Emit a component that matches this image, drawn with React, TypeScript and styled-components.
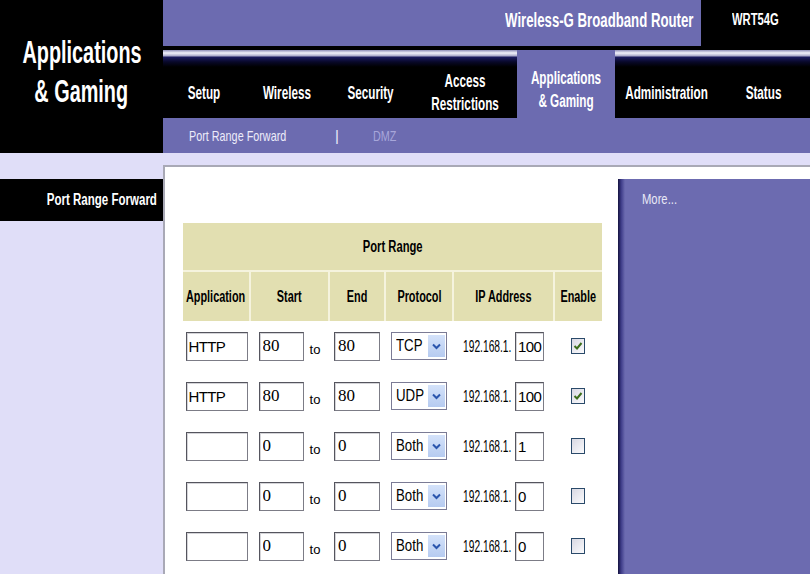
import React from 'react';
import styled, { createGlobalStyle } from 'styled-components';

const PURPLE = '#6c6bb0';
const LAVENDER = '#e0def8';
const KHAKI = '#e2dfb1';
const KHAKI_LINE = '#f5f3de';

const Global = createGlobalStyle`
  html, body { margin: 0; padding: 0; width: 810px; height: 574px; overflow: hidden; background: ${LAVENDER}; }
  body { font-family: "Liberation Sans", Arial, sans-serif; }
  * { box-sizing: border-box; }
`;

const Narrow = styled.span<{ $s?: number; $o?: string }>`
  display: inline-block;
  white-space: nowrap;
  transform: scaleX(${(p) => p.$s ?? 0.66});
  transform-origin: ${(p) => p.$o ?? 'center'};
`;

const Page = styled.div`
  width: 810px;
  height: 574px;
  display: flex;
  flex-direction: column;
`;

/* ---------- header ---------- */
const Header = styled.header`
  display: flex;
  height: 153px;
  flex: none;
`;

const TitleBlock = styled.h1`
  margin: 0;
  width: 163px;
  flex: none;
  background: #000;
  color: #fff;
  font-weight: bold;
  font-size: 31px;
  line-height: 39px;
  display: flex;
  flex-direction: column;
  align-items: center;
  padding-top: 33px;
`;

const HeaderMain = styled.div`
  flex: 1;
  display: flex;
  flex-direction: column;
`;

const TopBar = styled.div`
  height: 46px;
  display: flex;
`;

const ProductName = styled.div`
  flex: 1;
  background: ${PURPLE};
  color: #fff;
  font-weight: bold;
  font-size: 20px;
  display: flex;
  align-items: center;
  justify-content: flex-end;
  padding: 0 8px 6px 0;
`;

const ModelBox = styled.div`
  width: 109px;
  background: #000;
  color: #fff;
  font-weight: bold;
  font-size: 16px;
  display: flex;
  align-items: center;
  justify-content: center;
  padding-bottom: 6px;
`;

const Rule = styled.div`
  height: 4px;
  background: #000;
`;

const NavRow = styled.nav`
  height: 68px;
  display: grid;
  grid-template-columns: 82px 84px 84px 104px 98px 102px 1fr;
  background: #000;
`;

const NavItem = styled.div<{ $active?: boolean }>`
  display: flex;
  align-items: center;
  justify-content: center;
  text-align: center;
  color: #fff;
  font-weight: bold;
  font-size: 18px;
  line-height: 23px;
  padding-top: ${(p) => (p.$active ? '11px' : '18px')};
  background: ${(p) =>
    p.$active
      ? PURPLE
      : 'linear-gradient(to bottom, #8e8eb8 0px, #f2f2fc 3px, #a8a8c8 6px, #1c1c62 7px, #080828 12px, #000 17px)'};
`;

const SubBar = styled.div`
  height: 35px;
  background: ${PURPLE};
  display: grid;
  grid-template-columns: 146px 38px auto;
  align-items: center;
  padding-left: 26px;
  font-size: 15px;
`;

const SubItem = styled.span<{ $dim?: boolean }>`
  color: ${(p) => (p.$dim ? '#a7a6da' : '#ececfa')};
`;

/* ---------- body ---------- */
const Body = styled.div`
  flex: 1;
  display: flex;
  min-height: 0;
`;

const Sidebar = styled.aside`
  width: 163px;
  flex: none;
  padding-top: 26px;
`;

const SideItem = styled.div`
  height: 42px;
  background: #000;
  color: #fff;
  font-weight: bold;
  font-size: 16px;
  display: flex;
  align-items: center;
  justify-content: flex-end;
  padding-right: 6px;
`;

const Main = styled.main`
  flex: 1;
  margin-top: 12px;
  border-top: 2px solid #a9a9b6;
  border-left: 2px solid #a9a9b6;
  background: #fff;
  display: flex;
  overflow: hidden;
`;

const Content = styled.section`
  width: 453px;
  flex: none;
  padding: 56px 0 0 18px;
`;

const MorePanel = styled.aside`
  flex: 1;
  margin-top: 12px;
  background: linear-gradient(to right, #14123e 0px, #3c3a86 3px, ${PURPLE} 7px);
  color: #e8e8f6;
  font-size: 15px;
  padding: 11px 0 0 24px;
`;

/* ---------- table ---------- */
const Table = styled.table`
  width: 419px;
  border-collapse: collapse;
  table-layout: fixed;
`;

const TitleCell = styled.th`
  background: ${KHAKI};
  height: 48px;
  padding: 0;
  font-size: 16px;
  font-weight: bold;
  color: #000;
  border-bottom: 2px solid ${KHAKI_LINE};
`;

const HeadCell = styled.th`
  background: ${KHAKI};
  height: 50px;
  padding: 0;
  font-size: 16px;
  font-weight: bold;
  color: #000;
  border-left: 2px solid ${KHAKI_LINE};
  &:first-child {
    border-left: none;
  }
`;

const Cell = styled.td`
  height: 50px;
  padding: 0;
`;

const CellInner = styled.div<{ $gap?: number }>`
  display: flex;
  align-items: center;
  justify-content: center;
  gap: ${(p) => p.$gap ?? 0}px;
`;

const TextInput = styled.input<{ $w: number; $serif?: boolean }>`
  width: ${(p) => p.$w}px;
  height: 29px;
  margin: 0;
  padding: ${(p) => (p.$serif ? '0 2px 0 3px' : '0 0 0 2px')};
  border: 1px solid #7c7c86;
  border-top-color: #55555e;
  border-left-color: #55555e;
  box-shadow: inset 1px 1px 0 #d4d4d8;
  background: #fff;
  color: #000;
  font-family: ${(p) => (p.$serif ? '"Liberation Serif", "Times New Roman", serif' : '"Liberation Sans", Arial, sans-serif')};
  font-size: ${(p) => (p.$serif ? 17 : 15)}px;
  letter-spacing: ${(p) => (p.$serif ? '0' : '-0.6px')};
  outline: none;
`;

const ToLabel = styled.span`
  font-size: 13px;
  color: #000;
  padding-top: 7px;
`;

const SelectBox = styled.div`
  width: 56px;
  height: 28px;
  border: 1px solid #7b7b95;
  background: #fff;
  display: flex;
  align-items: stretch;
  font-size: 17px;
  color: #000;
`;

const SelectValue = styled.span`
  flex: 1;
  min-width: 0;
  display: flex;
  align-items: center;
  padding-left: 4px;
`;

const SelectArrow = styled.span`
  width: 17px;
  flex: none;
  margin: 2px 1px 2px 0;
  background: linear-gradient(to bottom, #d4e2fa, #b6cbf0);
  display: flex;
  align-items: center;
  justify-content: center;
`;

const IpPrefix = styled.span`
  display: inline-block;
  width: 52px;
  font-size: 16px;
  color: #000;
  padding-top: 2px;
`;

const CheckBox = styled.span`
  width: 14px;
  height: 16px;
  border: 1px solid #2a4a6a;
  background: linear-gradient(135deg, #d8d8e2, #fbfbfd);
  display: flex;
  align-items: center;
  justify-content: center;
`;

type Row = { app: string; start: string; end: string; proto: string; ip: string; on: boolean };

const rows: Row[] = [
  { app: 'HTTP', start: '80', end: '80', proto: 'TCP', ip: '100', on: true },
  { app: 'HTTP', start: '80', end: '80', proto: 'UDP', ip: '100', on: true },
  { app: '', start: '0', end: '0', proto: 'Both', ip: '1', on: false },
  { app: '', start: '0', end: '0', proto: 'Both', ip: '0', on: false },
  { app: '', start: '0', end: '0', proto: 'Both', ip: '0', on: false },
];

const headers = ['Application', 'Start', 'End', 'Protocol', 'IP Address', 'Enable'];
const colWidths = [67, 79, 56, 68, 101, 48];

const Chevron = () => (
  <svg width="9" height="7" viewBox="0 0 9 7">
    <path d="M1 1.5 L4.5 5 L8 1.5" fill="none" stroke="#2a55ad" strokeWidth="2" />
  </svg>
);

const Tick = () => (
  <svg width="10" height="10" viewBox="0 0 10 10">
    <path d="M1.5 5 L4 7.5 L8.5 2" fill="none" stroke="#3d6e1c" strokeWidth="2" />
  </svg>
);

const navItems: { label: React.ReactNode; active?: boolean }[] = [
  { label: 'Setup' },
  { label: 'Wireless' },
  { label: 'Security' },
  { label: (<>Access<br />Restrictions</>) },
  { label: (<>Applications<br />&amp; Gaming</>), active: true },
  { label: 'Administration' },
  { label: 'Status' },
];

export default function App() {
  return (
    <Page>
      <Global />
      <Header>
        <TitleBlock>
          <Narrow $s={0.64}>Applications</Narrow>
          <Narrow $s={0.64}>&amp; Gaming</Narrow>
        </TitleBlock>
        <HeaderMain>
          <TopBar>
            <ProductName>
              <Narrow $s={0.66} $o="right">Wireless-G Broadband Router</Narrow>
            </ProductName>
            <ModelBox>
              <Narrow $s={0.7}>WRT54G</Narrow>
            </ModelBox>
          </TopBar>
          <Rule />
          <NavRow>
            {navItems.map((n, i) => (
              <NavItem key={i} $active={n.active}>
                <Narrow $s={0.65}>{n.label}</Narrow>
              </NavItem>
            ))}
          </NavRow>
          <SubBar>
            <SubItem><Narrow $s={0.72} $o="left">Port Range Forward</Narrow></SubItem>
            <SubItem>|</SubItem>
            <SubItem $dim><Narrow $s={0.72} $o="left">DMZ</Narrow></SubItem>
          </SubBar>
        </HeaderMain>
      </Header>
      <Body>
        <Sidebar>
          <SideItem>
            <Narrow $s={0.72} $o="right">Port Range Forward</Narrow>
          </SideItem>
        </Sidebar>
        <Main>
          <Content>
            <Table>
              <colgroup>
                {colWidths.map((w, i) => (
                  <col key={i} style={{ width: w }} />
                ))}
              </colgroup>
              <thead>
                <tr>
                  <TitleCell colSpan={6}><Narrow $s={0.7}>Port Range</Narrow></TitleCell>
                </tr>
                <tr>
                  {headers.map((h) => (
                    <HeadCell key={h}>
                      <CellInner><Narrow $s={0.68}>{h}</Narrow></CellInner>
                    </HeadCell>
                  ))}
                </tr>
              </thead>
              <tbody>
                {rows.map((r, i) => (
                  <tr key={i}>
                    <Cell>
                      <CellInner>
                        <TextInput $w={62} defaultValue={r.app} />
                      </CellInner>
                    </Cell>
                    <Cell>
                      <CellInner $gap={6}>
                        <TextInput $w={45} $serif defaultValue={r.start} />
                        <ToLabel>to</ToLabel>
                      </CellInner>
                    </Cell>
                    <Cell>
                      <CellInner>
                        <TextInput $w={46} $serif defaultValue={r.end} />
                      </CellInner>
                    </Cell>
                    <Cell>
                      <CellInner>
                        <SelectBox>
                          <SelectValue><Narrow $s={0.78} $o="left">{r.proto}</Narrow></SelectValue>
                          <SelectArrow><Chevron /></SelectArrow>
                        </SelectBox>
                      </CellInner>
                    </Cell>
                    <Cell>
                      <CellInner>
                        <IpPrefix><Narrow $s={0.64} $o="left">192.168.1.</Narrow></IpPrefix>
                        <TextInput $w={29} defaultValue={r.ip} />
                      </CellInner>
                    </Cell>
                    <Cell>
                      <CellInner>
                        <CheckBox>{r.on && <Tick />}</CheckBox>
                      </CellInner>
                    </Cell>
                  </tr>
                ))}
              </tbody>
            </Table>
          </Content>
          <MorePanel>
            <Narrow $s={0.75} $o="left">More...</Narrow>
          </MorePanel>
        </Main>
      </Body>
    </Page>
  );
}
